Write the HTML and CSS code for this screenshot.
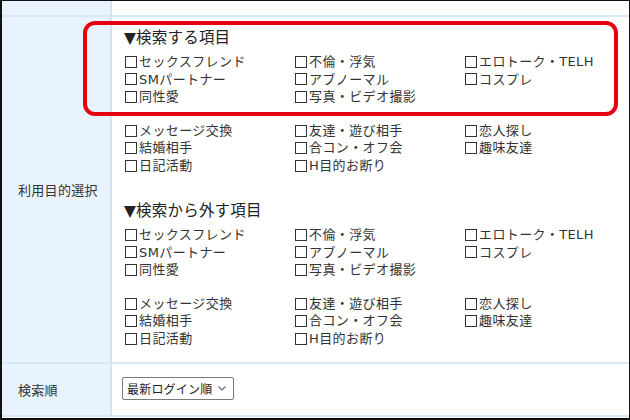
FILE: index.html
```html
<!DOCTYPE html>
<html lang="ja">
<head>
<meta charset="utf-8">
<title>検索条件</title>
<link rel="stylesheet" href="styles.css">
</head>
<body>
<div class="frame">
  <div class="table">
    <div class="th row-top"></div>
    <div class="td row-top"></div>

    <div class="th">利用目的選択</div>
    <div class="td purpose">
      <div class="section">
        <div class="heading">▼検索する項目</div>
        <div class="group">
          <label class="opt"><span class="box"></span>セックスフレンド</label>
          <label class="opt"><span class="box"></span>不倫・浮気</label>
          <label class="opt"><span class="box"></span>エロトーク・TELH</label>
          <label class="opt"><span class="box"></span>SMパートナー</label>
          <label class="opt"><span class="box"></span>アブノーマル</label>
          <label class="opt"><span class="box"></span>コスプレ</label>
          <label class="opt"><span class="box"></span>同性愛</label>
          <label class="opt"><span class="box"></span>写真・ビデオ撮影</label>
        </div>
        <div class="group">
          <label class="opt"><span class="box"></span>メッセージ交換</label>
          <label class="opt"><span class="box"></span>友達・遊び相手</label>
          <label class="opt"><span class="box"></span>恋人探し</label>
          <label class="opt"><span class="box"></span>結婚相手</label>
          <label class="opt"><span class="box"></span>合コン・オフ会</label>
          <label class="opt"><span class="box"></span>趣味友達</label>
          <label class="opt"><span class="box"></span>日記活動</label>
          <label class="opt"><span class="box"></span>H目的お断り</label>
        </div>
      </div>
      <div class="section section-2">
        <div class="heading">▼検索から外す項目</div>
        <div class="group">
          <label class="opt"><span class="box"></span>セックスフレンド</label>
          <label class="opt"><span class="box"></span>不倫・浮気</label>
          <label class="opt"><span class="box"></span>エロトーク・TELH</label>
          <label class="opt"><span class="box"></span>SMパートナー</label>
          <label class="opt"><span class="box"></span>アブノーマル</label>
          <label class="opt"><span class="box"></span>コスプレ</label>
          <label class="opt"><span class="box"></span>同性愛</label>
          <label class="opt"><span class="box"></span>写真・ビデオ撮影</label>
        </div>
        <div class="group">
          <label class="opt"><span class="box"></span>メッセージ交換</label>
          <label class="opt"><span class="box"></span>友達・遊び相手</label>
          <label class="opt"><span class="box"></span>恋人探し</label>
          <label class="opt"><span class="box"></span>結婚相手</label>
          <label class="opt"><span class="box"></span>合コン・オフ会</label>
          <label class="opt"><span class="box"></span>趣味友達</label>
          <label class="opt"><span class="box"></span>日記活動</label>
          <label class="opt"><span class="box"></span>H目的お断り</label>
        </div>
      </div>
    </div>

    <div class="th">検索順</div>
    <div class="td order">
      <div class="select">
        <span class="select-text">最新ログイン順</span>
        <svg class="chev" width="8" height="5" viewBox="0 0 8 5"><path d="M0.5 0.5 L4 4 L7.5 0.5" fill="none" stroke="#666" stroke-width="1.1"/></svg>
      </div>
    </div>
  </div>
  <div class="highlight"></div>
</div>
</body>
</html>
```

FILE: styles.css
```css
* { box-sizing: border-box; }
html, body { margin: 0; padding: 0; background: #fff; }
body {
  font-family: "DejaVu Sans", "Noto Sans CJK JP", sans-serif;
  color: #333;
}
.frame {
  position: relative;
  width: 630px;
  height: 420px;
  border-style: solid;
  border-color: #111;
  border-width: 1px 1px 2px 2px;
  overflow: hidden;
  background: #fff;
}
.table {
  display: grid;
  grid-template-columns: 110px 1fr;
  grid-template-rows: 16px 347px 53px;
}
.th {
  background: #e9f3fd;
  border-right: 2px solid #d2e3f6;
  border-bottom: 2px solid #d9e8f8;
  display: flex;
  align-items: center;
  padding-left: 16px;
  font-size: 13px;
  letter-spacing: 0.3px;
  font-family: "Noto Sans CJK JP", sans-serif;
  color: #333;
}
.td {
  border-bottom: 2px solid #d9e8f8;
  background: #fff;
}
.purpose {
  padding: 11px 0 0 12px;
}
.heading {
  font-size: 15.5px;
  line-height: 20px;
  color: #222;
  letter-spacing: 0.2px;
}
.group {
  display: grid;
  grid-template-columns: 170px 170px 170px;
  margin-top: 5px;
}
.group + .group { margin-top: 16px; }
.section-2 { margin-top: 26.5px; }
.opt {
  display: flex;
  align-items: center;
  font-size: 13px;
  line-height: 17.6px;
  height: 17.6px;
  padding-left: 1px;
  letter-spacing: 0.4px;
  white-space: nowrap;
  color: #333;
}
.box {
  display: inline-block;
  width: 12px;
  height: 12px;
  border: 1px solid #333;
  margin-right: 2px;
  flex: none;
}
.order {
  display: flex;
  align-items: center;
  padding-left: 10px;
}
.select {
  width: 112px;
  height: 23px;
  border: 1px solid #7a7a7a;
  border-radius: 2px;
  display: flex;
  align-items: center;
  padding: 0 4px 0 4px;
  font-family: "Noto Sans CJK JP", sans-serif;
  font-size: 12px;
  letter-spacing: 0.2px;
  color: #222;
  margin-top: -2px;
  background: #fff;
}
.select-text { flex: 1; }
.chev { flex: none; margin-right: 3px; }
.highlight {
  position: absolute;
  left: 81px;
  top: 20px;
  width: 535px;
  height: 95px;
  border: 4px solid #e50012;
  border-radius: 12px;
  pointer-events: none;
}
```
